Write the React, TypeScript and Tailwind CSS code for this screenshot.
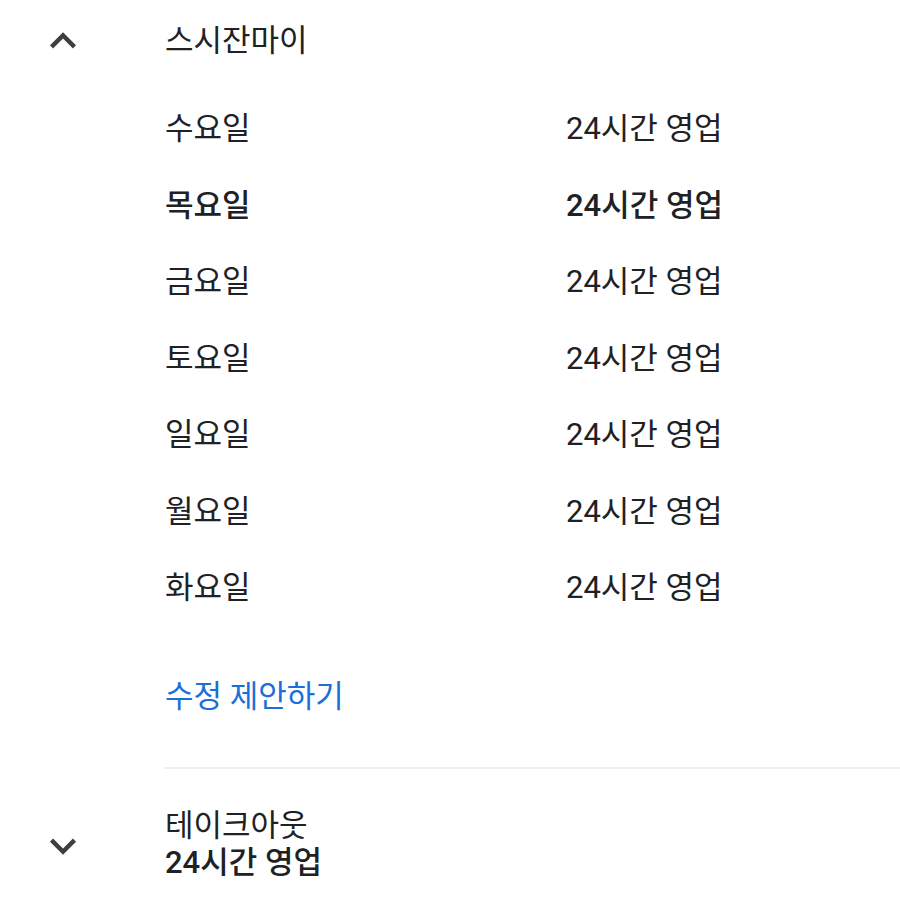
import React from "react";

const days = [
  { day: "수요일", hours: "24시간 영업", today: false },
  { day: "목요일", hours: "24시간 영업", today: true },
  { day: "금요일", hours: "24시간 영업", today: false },
  { day: "토요일", hours: "24시간 영업", today: false },
  { day: "일요일", hours: "24시간 영업", today: false },
  { day: "월요일", hours: "24시간 영업", today: false },
  { day: "화요일", hours: "24시간 영업", today: false },
];

const Chevron = ({ up }: { up: boolean }) => (
  <svg width="52" height="52" viewBox="0 0 24 24" fill="#3c4043">
    {up ? (
      <path d="M12 8l-6 6 1.41 1.41L12 10.83l4.59 4.58L18 14z" />
    ) : (
      <path d="M16.59 8.59L12 13.17 7.41 8.59 6 10l6 6 6-6z" />
    )}
  </svg>
);

export default function App() {
  return (
    <div
      className="w-[900px] h-[900px] bg-white overflow-hidden text-[#202124]"
      style={{ fontFamily: 'Roboto, "Noto Sans CJK KR", sans-serif' }}
    >
      <div className="flex">
        <div className="w-[165px] shrink-0 pl-[37px] pt-[15px]">
          <div className="h-[52px]">
            <Chevron up />
          </div>
        </div>
        <div className="flex-1">
          <div className="h-[82px] flex items-center text-[31px]">스시잔마이</div>
          <div className="mt-[9px]">
            {days.map((d) => (
              <div
                key={d.day}
                className={`h-[76.5px] flex items-center text-[31px] ${
                  d.today ? "font-medium" : ""
                }`}
              >
                <div className="w-[401px]">{d.day}</div>
                <div>{d.hours}</div>
              </div>
            ))}
          </div>
          <div className="mt-[53px] h-[36px] flex items-center text-[31px] text-[#1a6fd8]">
            수정 제안하기
          </div>
          <div className="mt-[51px] h-[2px] bg-[#ececec]" />
        </div>
      </div>
      <div className="flex">
        <div className="w-[165px] shrink-0 pl-[37px] pt-[51px]">
          <div className="h-[52px]">
            <Chevron up={false} />
          </div>
        </div>
        <div className="flex-1 pt-[38px] text-[31px] leading-[37px]">
          <div>테이크아웃</div>
          <div className="font-medium">24시간 영업</div>
        </div>
      </div>
    </div>
  );
}
